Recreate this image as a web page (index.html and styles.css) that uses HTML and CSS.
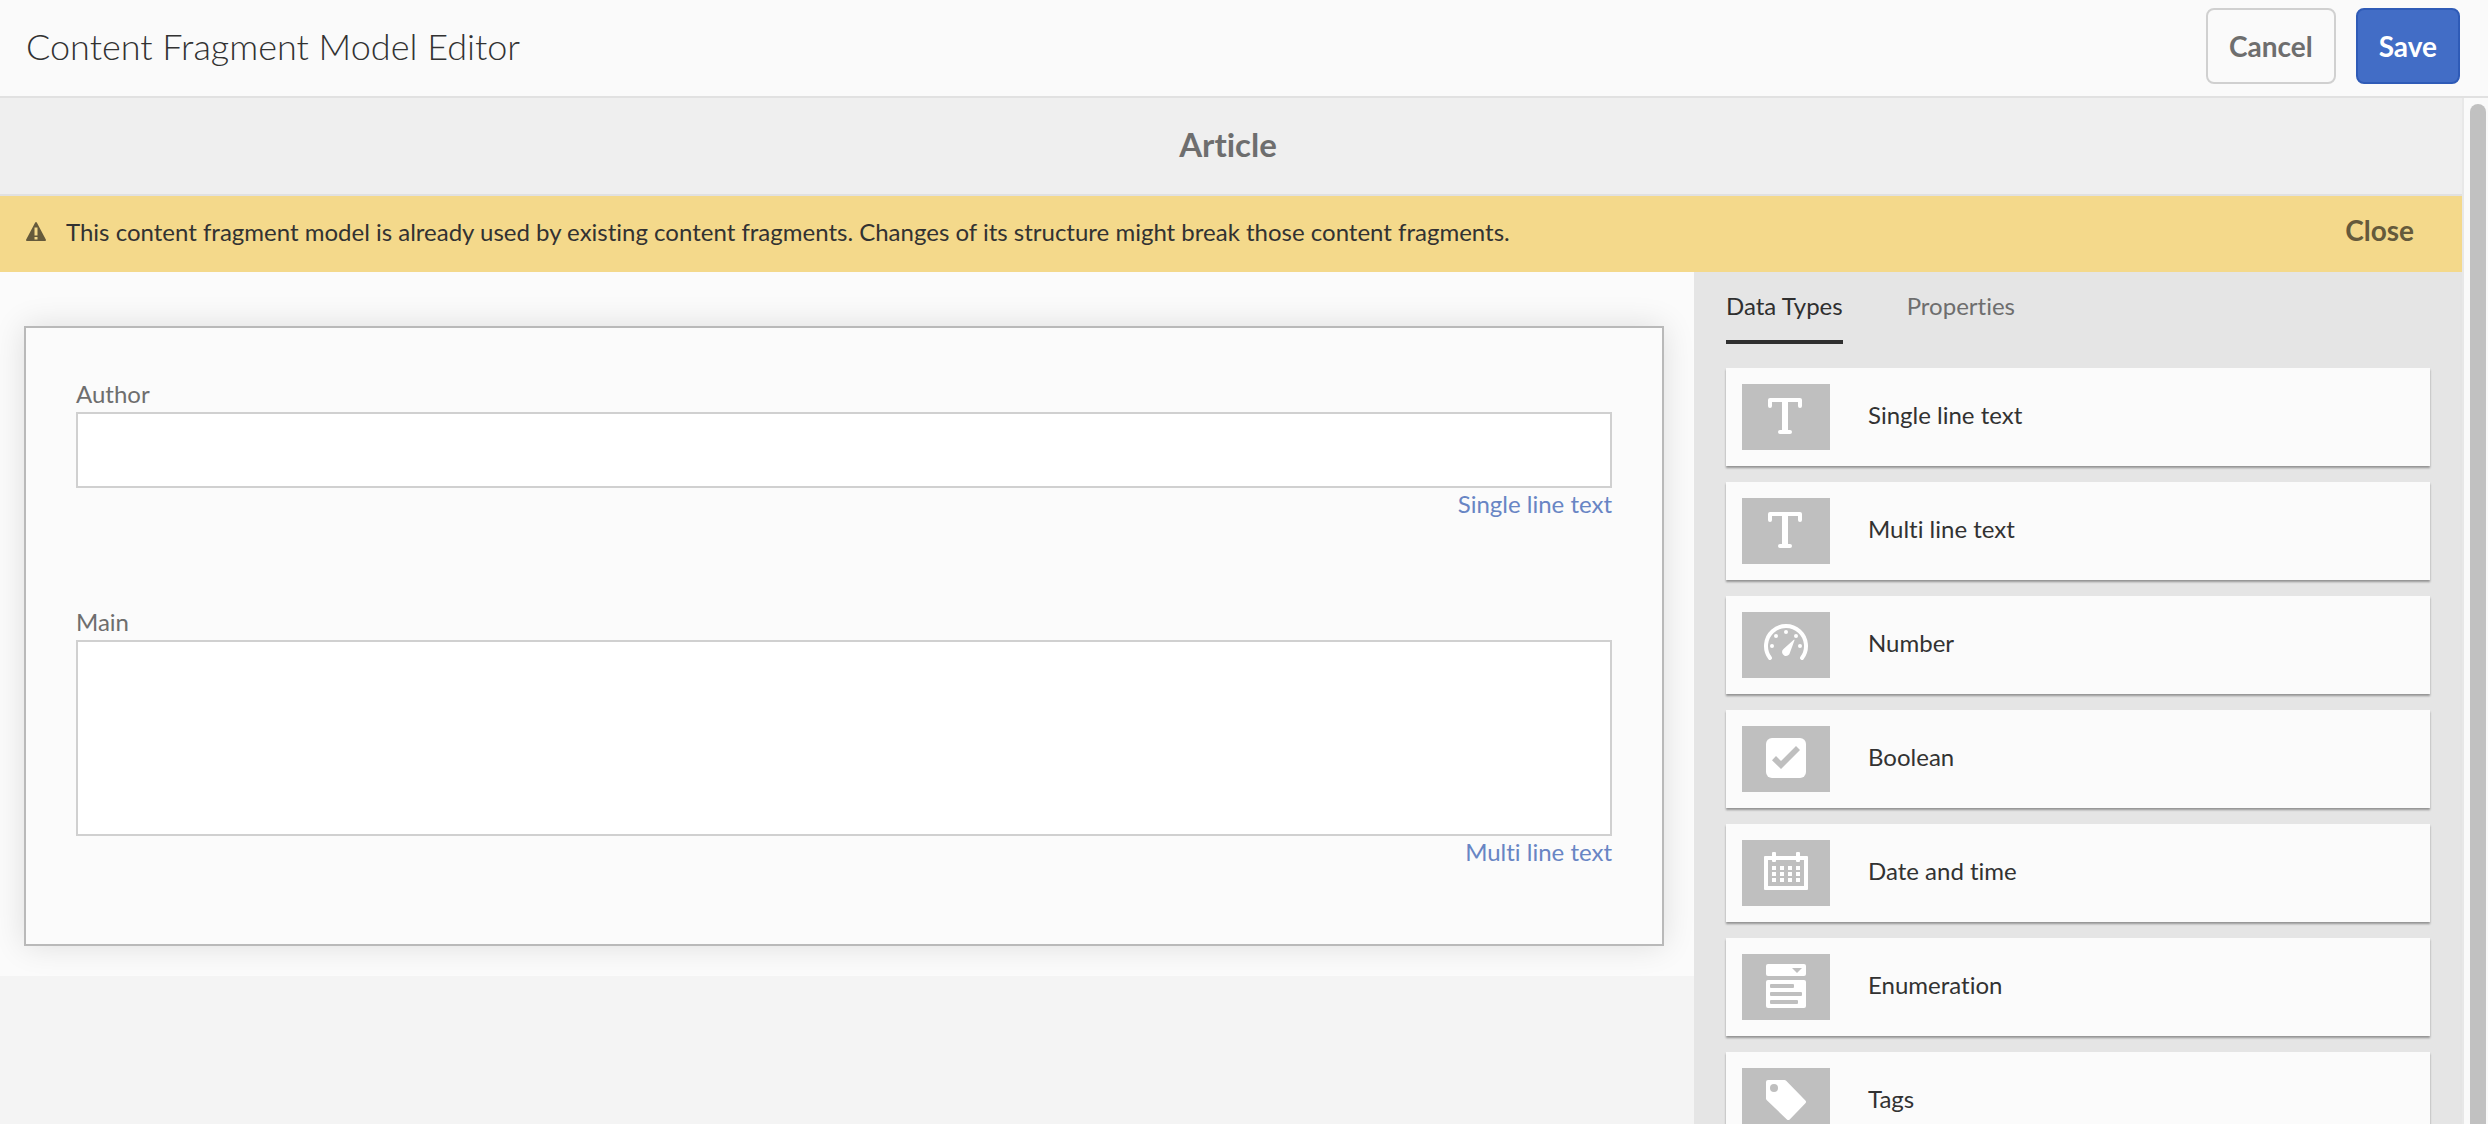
FILE: index.html
```html
<!DOCTYPE html>
<html lang="en">
<head>
  <meta charset="utf-8">
  <title>Content Fragment Model Editor</title>
  <link rel="stylesheet" href="styles.css">
</head>
<body>
  <header class="header">
    <h1 class="header-title">Content Fragment Model Editor</h1>
    <div class="header-actions">
      <button class="button" type="button">Cancel</button>
      <button class="button button-primary" type="button">Save</button>
    </div>
  </header>

  <div class="scroll-area">
    <main class="content">
      <h2 class="model-name">Article</h2>

      <div class="alert" role="alert">
        <svg class="alert-icon" viewBox="0 0 20 20" aria-hidden="true">
          <path fill-rule="evenodd" d="M9.200.6a.9.9 0 0 1 1.600 0l9 17a.9.9 0 0 1-.8 1.300H1a.9.9 0 0 1-.8-1.300zM8.500 5.500v8h3v-8zM8.500 15v2.500h3V15z"/>
        </svg>
        <p class="alert-text">This content fragment model is already used by existing content fragments. Changes of its structure might break those content fragments.</p>
        <button class="alert-close" type="button">Close</button>
      </div>

      <div class="editor">
        <section class="canvas">
          <form class="model-form">
            <div class="field">
              <label class="field-label" for="author">Author</label>
              <input class="field-input" id="author" type="text">
              <span class="field-type">Single line text</span>
            </div>
            <div class="field">
              <label class="field-label" for="main">Main</label>
              <textarea class="field-input field-input-multi" id="main"></textarea>
              <span class="field-type">Multi line text</span>
            </div>
          </form>
        </section>

        <aside class="sidebar">
          <div class="tabs" role="tablist">
            <button class="tab tab-active" type="button" role="tab" aria-selected="true">Data Types</button>
            <button class="tab" type="button" role="tab" aria-selected="false">Properties</button>
          </div>
          <ul class="type-list">
            <li class="type-card">
              <svg class="type-icon" viewBox="0 0 88 66" aria-hidden="true">
                <path d="M28 14h30a2 2 0 0 1 2 2v6a2 2 0 0 1-4 0v-4H46v28h2a2 2 0 0 1 0 4H38a2 2 0 0 1 0-4h2V18H30v4a2 2 0 0 1-4 0v-6a2 2 0 0 1 2-2z"/>
              </svg>
              <span class="type-name">Single line text</span>
            </li>
            <li class="type-card">
              <svg class="type-icon" viewBox="0 0 88 66" aria-hidden="true">
                <path d="M28 14h30a2 2 0 0 1 2 2v6a2 2 0 0 1-4 0v-4H46v28h2a2 2 0 0 1 0 4H38a2 2 0 0 1 0-4h2V18H30v4a2 2 0 0 1-4 0v-6a2 2 0 0 1 2-2z"/>
              </svg>
              <span class="type-name">Multi line text</span>
            </li>
            <li class="type-card">
              <svg class="type-icon" viewBox="0 0 88 66" aria-hidden="true">
                <path class="stroke" d="M28 46a20 20 0 1 1 32 0"/>
                <circle cx="30" cy="34" r="2"/>
                <circle cx="34" cy="24" r="2"/>
                <circle cx="44" cy="20" r="2"/>
                <circle cx="54" cy="24" r="2"/>
                <circle cx="58" cy="34" r="2"/>
                <path d="M52.500 28.200L48 40.500a4 4 0 1 1-6.500-3.600l10.300-9.200a.5.5 0 0 1 .7.500z"/>
              </svg>
              <span class="type-name">Number</span>
            </li>
            <li class="type-card">
              <svg class="type-icon" viewBox="0 0 88 66" aria-hidden="true">
                <rect x="24" y="12" width="40" height="40" rx="6"/>
                <path class="cut" d="M30 34.300l4-4.300 5 5L54 20l4 4-19 19z"/>
              </svg>
              <span class="type-name">Boolean</span>
            </li>
            <li class="type-card">
              <svg class="type-icon" viewBox="0 0 88 66" aria-hidden="true">
                <path fill-rule="evenodd" d="M23 16h42a1 1 0 0 1 1 1v32a1 1 0 0 1-1 1H23a1 1 0 0 1-1-1V17a1 1 0 0 1 1-1zm3 4v26h36V20z"/>
                <rect x="30" y="12" width="4" height="10" rx="1"/>
                <rect x="54" y="12" width="4" height="10" rx="1"/>
                <path d="M30 26h4v4h-4zM38 26h4v4h-4zM46 26h4v4h-4zM54 26h4v4h-4zM30 32h4v4h-4zM38 32h4v4h-4zM46 32h4v4h-4zM54 32h4v4h-4zM30 38h4v4h-4zM38 38h4v4h-4zM46 38h4v4h-4zM54 38h4v4h-4z"/>
              </svg>
              <span class="type-name">Date and time</span>
            </li>
            <li class="type-card">
              <svg class="type-icon" viewBox="0 0 88 66" aria-hidden="true">
                <rect x="24" y="10" width="40" height="12" rx="2"/>
                <rect x="24" y="26" width="40" height="28" rx="2"/>
                <path class="cut" d="M50 14h10l-5 5z"/>
                <rect class="cut" x="28" y="30" width="24" height="4" rx="1"/>
                <rect class="cut" x="28" y="38" width="32" height="4" rx="1"/>
                <rect class="cut" x="28" y="46" width="28" height="4" rx="1"/>
              </svg>
              <span class="type-name">Enumeration</span>
            </li>
            <li class="type-card">
              <svg class="type-icon" viewBox="0 0 88 66" aria-hidden="true">
                <path d="M26 12h16.500a2 2 0 0 1 1.400.6l19.500 19.800a2 2 0 0 1 0 2.800L47.700 51.400a2 2 0 0 1-2.800 0L24.600 32a2 2 0 0 1-.6-1.400V14a2 2 0 0 1 2-2z"/>
                <circle class="cut" cx="32" cy="20" r="4"/>
              </svg>
              <span class="type-name">Tags</span>
            </li>
          </ul>
        </aside>
      </div>
    </main>
    <div class="scrollbar" aria-hidden="true"><div class="scrollbar-thumb"></div></div>
  </div>
</body>
</html>
```
FILE: styles.css
```css
* {
  box-sizing: border-box;
}

body {
  display: flex;
  flex-direction: column;
  height: 100vh;
  margin: 0;
  overflow: hidden;
  background: #fafafa;
  color: #323232;
  font: 24px/32px Lato, "Liberation Sans", sans-serif;
  font-variant-ligatures: none;
}

h1,
h2,
p,
ul {
  margin: 0;
  padding: 0;
}

button {
  font: inherit;
  font-variant-ligatures: none;
  cursor: pointer;
}

.header {
  display: flex;
  flex: none;
  align-items: center;
  justify-content: space-between;
  padding: 8px 28px 12px 26px;
  border-bottom: 2px solid #e1e1e1;
}

.header-title {
  font-size: 36px;
  font-weight: 300;
}

.header-actions {
  display: flex;
  gap: 20px;
}

.button {
  height: 76px;
  padding: 0 21px;
  border: 2px solid #d0d0d0;
  border-radius: 8px;
  background: #fafafa;
  color: #6e6e6e;
  font-size: 28px;
  font-weight: 700;
}

.button-primary {
  border-color: #2f5bb7;
  background: #426dc6;
  color: #fff;
}

.scroll-area {
  display: flex;
  flex: 1;
  min-height: 0;
}

.content {
  display: flex;
  flex: 1;
  flex-direction: column;
  min-width: 0;
  overflow: hidden;
}

.model-name {
  flex: none;
  padding: 0 6px 4px 0;
  border-bottom: 2px solid #e1e1e1;
  background: #efefef;
  color: #6e6e6e;
  font-size: 33px;
  font-weight: 700;
  line-height: 92px;
  text-align: center;
}

.alert {
  display: flex;
  flex: none;
  align-items: center;
  height: 76px;
  padding: 0 48px 4px 26px;
  background: #f4d98b;
}

.alert-icon {
  width: 20px;
  height: 20px;
  margin-right: 20px;
  fill: #655a3b;
}

.alert-text {
  flex: 1;
}

.alert-close {
  padding: 0 0 4px;
  border: 0;
  background: none;
  color: #655a3b;
  font-size: 28px;
  font-weight: 700;
}

.editor {
  display: flex;
  flex: 1;
  min-height: 0;
  background: #f4f4f4;
}

.canvas {
  flex: 1;
  align-self: flex-start;
  padding: 54px 30px 30px 24px;
  background: #fbfbfb;
}

.model-form {
  display: flex;
  flex-direction: column;
  gap: 84px;
  padding: 52px 50px 72px;
  border: 2px solid #b9b9b9;
  background: #fbfbfb;
  box-shadow: 0 0 30px rgba(0, 0, 0, 0.12);
}

.field {
  display: flex;
  flex-direction: column;
}

.field-label {
  padding-bottom: 4px;
  color: #6e6e6e;
  line-height: 28px;
}

.field-input {
  height: 76px;
  padding: 0 20px;
  border: 2px solid #d0d0d0;
  border-radius: 0;
  outline: 0;
  background: #fff;
  color: inherit;
  font: inherit;
}

.field-input-multi {
  height: 196px;
  padding: 16px 20px;
  resize: none;
}

.field-type {
  padding-bottom: 4px;
  color: #6885c4;
  text-align: right;
}

.sidebar {
  flex: none;
  width: 768px;
  padding: 0 32px;
  overflow: hidden;
  background: #e5e5e5;
}

.tabs {
  display: flex;
  gap: 64px;
}

.tab {
  height: 72px;
  padding: 0;
  border: 0;
  border-bottom: 4px solid transparent;
  background: none;
  color: #6e6e6e;
}

.tab-active {
  border-color: #2f2f2f;
  color: #2f2f2f;
}

.type-list {
  display: flex;
  flex-direction: column;
  gap: 16px;
  margin-top: 24px;
  list-style: none;
}

.type-card {
  display: flex;
  flex: none;
  align-items: center;
  gap: 38px;
  padding: 16px;
  background: #fbfbfb;
  box-shadow: 0 2px 2px rgba(0, 0, 0, 0.36);
}

.type-icon {
  width: 88px;
  height: 66px;
  background: #bfbfbf;
  fill: #fff;
}

.type-icon .stroke {
  fill: none;
  stroke: #fff;
  stroke-linecap: round;
  stroke-width: 4px;
}

.type-icon .cut {
  fill: #bfbfbf;
}

.type-name {
  padding-bottom: 4px;
}

.scrollbar {
  flex: none;
  width: 26px;
  padding: 6px 2px 0 6px;
  border-left: 2px solid #e8e8e8;
  background: #fafafa;
}

.scrollbar-thumb {
  height: 100%;
  border-radius: 8px 8px 0 0;
  background: #c1c1c1;
}
```
